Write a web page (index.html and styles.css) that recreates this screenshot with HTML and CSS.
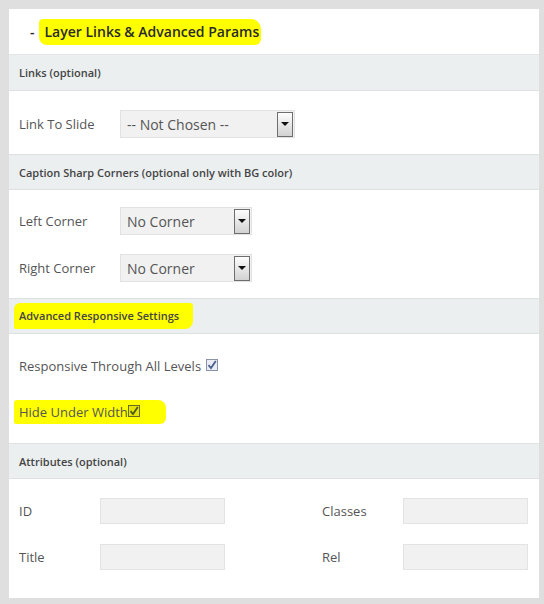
FILE: index.html
```html
<!DOCTYPE html>
<html>
<head>
<meta charset="utf-8">
<link rel="stylesheet" href="styles.css">
</head>
<body>
<div class="panel">
  <div class="panel-title"><span class="dash">-</span><span class="hl hl-title">Layer Links &amp; Advanced Params</span></div>

  <div class="section-head">Links (optional)</div>
  <div class="section-body sb-links">
    <div class="row">
      <span class="label">Link To Slide</span>
      <div class="select sel-wide"><span class="sel-text">-- Not Chosen --</span><span class="arrow"></span></div>
    </div>
  </div>

  <div class="section-head">Caption Sharp Corners (optional only with BG color)</div>
  <div class="section-body sb-corners">
    <div class="row">
      <span class="label">Left Corner</span>
      <div class="select sel-narrow"><span class="sel-text">No Corner</span><span class="arrow"></span></div>
    </div>
    <div class="row">
      <span class="label">Right Corner</span>
      <div class="select sel-narrow"><span class="sel-text">No Corner</span><span class="arrow"></span></div>
    </div>
  </div>

  <div class="section-head"><span class="hl hl-adv">Advanced Responsive Settings</span></div>
  <div class="section-body sb-adv">
    <div class="row row-text">
      <span class="text">Responsive Through All Levels</span><span class="check"><svg width="10" height="10" viewBox="0 0 10 10"><path d="M1.5 5.2 L4 8 L8.8 1" fill="none" stroke="#4a5f8c" stroke-width="1.8"/></svg></span>
    </div>
    <div class="row row-text">
      <span class="hl hl-hide"><span class="text">Hide Under Width</span><span class="check check-y"><svg width="10" height="10" viewBox="0 0 10 10"><path d="M1.5 5.2 L4 8 L8.8 1" fill="none" stroke="#4d5a1a" stroke-width="1.8"/></svg></span></span>
    </div>
  </div>

  <div class="section-head">Attributes (optional)</div>
  <div class="section-body sb-attr">
    <div class="row">
      <span class="label label-a">ID</span><span class="input"></span>
      <span class="label label-b">Classes</span><span class="input"></span>
    </div>
    <div class="row">
      <span class="label label-a">Title</span><span class="input"></span>
      <span class="label label-b">Rel</span><span class="input"></span>
    </div>
  </div>
</div>
</body>
</html>
```

FILE: styles.css
```css
html, body {
  margin: 0;
  padding: 0;
}
body {
  background: #dfdfdf;
  padding: 9px 5px 8px 9px;
  font-family: "Open Sans", "Liberation Sans", sans-serif;
  color: #555;
}
.panel {
  width: 530px;
  background: #fff;
}
.panel-title {
  height: 45px;
  border-bottom: 1px solid #e4e6e7;
  display: flex;
  align-items: center;
  padding-left: 21px;
  font-size: 14px;
  font-weight: 600;
  color: #2a2a2a;
}
.dash {
  margin-right: 10px;
}
.hl {
  background: #ffff00;
}
.hl-title {
  padding: 3px 2px 4px 6px;
  margin-left: -6px;
  border-radius: 4px 10px 6px 8px;
}
.section-head {
  height: 35px;
  background: #eceff0;
  border-bottom: 1px solid #dde1e2;
  display: flex;
  align-items: center;
  padding-left: 10px;
  font-size: 11px;
  font-weight: 600;
  color: #444;
}
.section-body + .section-head {
  border-top: 1px solid #dde1e2;
  height: 34px;
}
.hl-adv {
  padding: 5px 14px 6px 5px;
  margin-left: -5px;
  border-radius: 6px 3px 8px 2px;
}
.section-body {
  padding-left: 10px;
  display: flex;
  flex-direction: column;
}
.row {
  display: flex;
  align-items: center;
  height: 28px;
  font-size: 13px;
}
.label {
  width: 101px;
  flex: none;
}
.sb-links {
  padding-top: 19px;
  padding-bottom: 16px;
}
.sb-corners {
  padding-top: 17px;
  padding-bottom: 16px;
  gap: 19px;
}
.sb-adv {
  padding-top: 18px;
  padding-bottom: 17px;
  gap: 18px;
}
.sb-attr {
  padding-top: 18px;
  padding-bottom: 27px;
  gap: 18px;
}
.select {
  height: 26px;
  background: #f1f1f1;
  border: 1px solid #e2e2e2;
  display: flex;
  align-items: center;
  justify-content: space-between;
  box-sizing: content-box;
}
.sel-wide { width: 173px; }
.sel-narrow { width: 130px; }
.sel-text {
  font-size: 14px;
  color: #555;
  padding-left: 6px;
}
.arrow {
  width: 14px;
  height: 23px;
  margin-right: 1px;
  border: 1px solid #6e6e6e;
  background: linear-gradient(#fdfdfd, #d2d2d2);
  position: relative;
}
.arrow::after {
  content: "";
  position: absolute;
  left: 3px;
  top: 9px;
  border-left: 4px solid transparent;
  border-right: 4px solid transparent;
  border-top: 4px solid #111;
}
.row-text {
  height: 28px;
}
.check {
  display: inline-flex;
  align-items: center;
  justify-content: center;
  width: 10px;
  height: 10px;
  border: 1px solid #8a94a8;
  background: #e9ecf4;
  margin-left: 5px;
  position: relative;
  top: -1px;
}
.check-y {
  margin-left: 0;
  border-color: #6a6a20;
  background: #e4e400;
}
.hl-hide {
  display: inline-flex;
  align-items: center;
  padding: 3px 26px 3px 5px;
  margin-left: -5px;
  border-radius: 3px 8px 6px 2px;
}
.label-a { width: 81px; }
.label-b { width: 81px; margin-left: 97px; }
.input {
  width: 123px;
  height: 24px;
  background: #f1f1f1;
  border: 1px solid #e3e3e3;
  flex: none;
}
```
